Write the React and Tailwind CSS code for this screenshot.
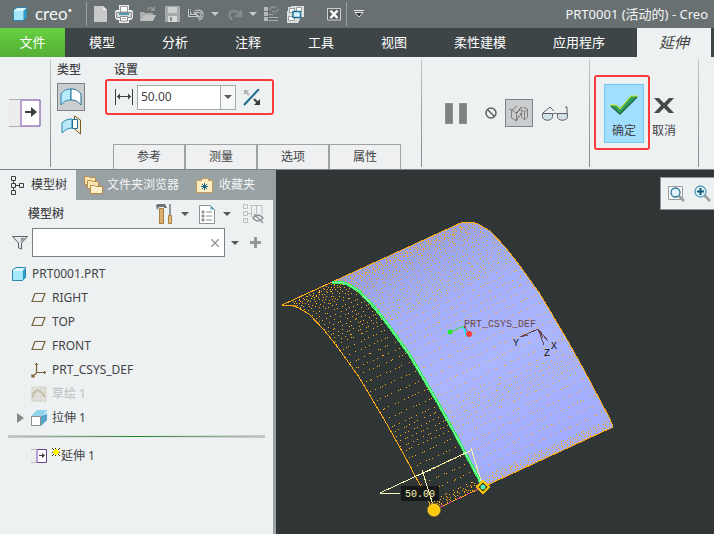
const quickActions = [
  { label: '新建', icon: <NewIcon />, pad: 'ml-[7px]' },
  { label: '打印', icon: <PrinterIcon />, pad: 'ml-2' },
  { label: '打开', icon: <OpenIcon />, pad: 'ml-[7px]' },
  { label: '保存', icon: <SaveIcon />, pad: 'ml-2' },
  { label: '撤消', icon: <UndoIcon />, pad: 'ml-2' },
  { label: '撤消列表', icon: <Caret color="#c3c8c9" />, pad: 'ml-1.5' },
  { label: '重做', icon: <RedoIcon />, pad: 'ml-2' },
  { label: '重做列表', icon: <Caret color="#c3c8c9" />, pad: 'ml-1.5' },
  { label: '重新生成', icon: <RegenIcon />, pad: 'ml-[7px]' },
  { label: '窗口', icon: <WindowsIcon />, pad: 'ml-2' },
  { label: '窗口列表', icon: <Caret color="#787071" />, pad: 'ml-[7px]' },
  { label: '关闭', icon: <CloseBoxIcon />, pad: 'ml-2' },
];

const ribbonTabs = ['模型', '分析', '注释', '工具', '视图', '柔性建模', '应用程序'];
const panelTabs = ['参考', '测量', '选项', '属性'];

const treeItems = [
  { label: 'RIGHT', icon: <PlaneIcon /> },
  { label: 'TOP', icon: <PlaneIcon /> },
  { label: 'FRONT', icon: <PlaneIcon /> },
  { label: 'PRT_CSYS_DEF', icon: <CsysIcon /> },
  { label: '草绘 1', icon: <SketchIcon />, muted: true },
  { label: '拉伸 1', icon: <ExtrudeIcon />, expandable: true },
];

/* ---------- icons ---------- */

function Caret({ color = '#58595b' }) {
  return (
    <svg width="8" height="4" viewBox="0 0 8 4">
      <path d="M0 0h8L4 4z" fill={color} />
    </svg>
  );
}

function CubeIcon() {
  return (
    <svg width="14" height="14" viewBox="0 0 14 14">
      <path d="M1 3L4 .5h9.500L11 3z" fill="#d9f5fd" />
      <path d="M10.500 3L13.500.5v10L10.500 13.500z" fill="#2f9fcb" />
      <path d="M.5 3h10v10.500H.5z" fill="#a5e8fc" />
      <path d="M.5 3L4 .5h9.500v10l-3 3H.5z" fill="none" stroke="#2d86ac" />
      <path d="M1 3.500h9.500L13 1" fill="none" stroke="#e4f9ff" strokeWidth=".8" />
    </svg>
  );
}

function NewIcon() {
  return (
    <svg width="13" height="16" viewBox="0 0 13 16">
      <path d="M0 0h9l4 4v12H0z" fill="#c8c9c9" />
      <path d="M9 0v4h4z" fill="#ececec" />
    </svg>
  );
}

function PrinterIcon() {
  return (
    <svg width="18" height="18" viewBox="0 0 18 18">
      <path d="M4 0h10v5h3l1 2v6l-2 2h-2v3H4v-3H2l-2-2V7l1-2h3z" fill="#ededed" />
      <path d="M5.500 1.500h7V7h-7z" fill="#fff" stroke="#999" />
      <path d="M1.500 7.500h15v5h-15z" fill="#d8d8d8" stroke="#8a8a8a" />
      <path d="M4 8h10v2H4z" fill="#4b9ab5" />
      <path d="M5.500 11.500h7V16h-7z" fill="#fff" stroke="#888" />
      <path d="M7 13.500h4" stroke="#aaa" />
    </svg>
  );
}

function OpenIcon() {
  return (
    <svg width="17" height="16" viewBox="0 0 17 16">
      <path d="M0 6h4l1 1h8v3H4l-4 5z" fill="#aaabab" />
      <path d="M4 9h12l-3 6H0z" fill="#c0c1c1" />
      <path d="M8 4c1-3 3-3 5-1" stroke="#929696" strokeWidth="1.500" fill="none" />
      <path d="M15 0v5h-5z" fill="#929696" />
    </svg>
  );
}

function SaveIcon() {
  return (
    <svg width="15" height="16" viewBox="0 0 15 16">
      <path d="M0 0h15v16H0z" fill="#a6a9a9" />
      <path d="M3 1h9v6H3z" fill="#cccece" />
      <path d="M3 10h9v6H3z" fill="#d8d8d8" />
      <path d="M5 11h2v4H5z" fill="#858989" />
    </svg>
  );
}

function UndoIcon() {
  return (
    <svg width="17" height="14" viewBox="0 0 17 14" fill="none">
      <path d="M1.500 2v6.500H8L5.500 6.500C9 2.500 14.500 4 14 8c0 2-1.500 3.500-3.500 4.500" stroke="#c9cdcd" strokeWidth="3" />
      <path d="M1.500 2v6.500H8M4 6.500C8 2.500 14.500 4 14 8c0 2-1.500 3.500-3.500 4.500M2 3l4 4" stroke="#565c5d" strokeWidth="1" />
    </svg>
  );
}

function RedoIcon() {
  return (
    <svg width="16" height="14" viewBox="0 0 16 14" fill="none">
      <path d="M14 3v6H8M13 8C10 2.500 2.500 3 2.500 8c0 2 1.500 3.500 3 4" stroke="#848b8b" strokeWidth="2.500" />
    </svg>
  );
}

function RegenIcon() {
  return (
    <svg width="15" height="16" viewBox="0 0 15 16">
      <path d="M0 1h4v4H0zM0 6h4v4H0zM0 11h4v4H0z" fill="#b6baba" />
      <path d="M5 8.500h4M5 11.500h9M5 14.500h9" stroke="#a7acac" />
      <path d="M6 4c0-3 4-4 6-2M14 3c0 3-4 4-6 2" stroke="#8e9494" strokeWidth="1.500" fill="none" />
    </svg>
  );
}

function WindowsIcon() {
  return (
    <svg width="17" height="17" viewBox="0 0 17 17">
      <path d="M4 0h13v11h-3l-3 6H0V5h1V1h3z" fill="#dedfdf" />
      <path d="M2.500 2.500h5v4h-5zM9.500 1.500h5v4h-5zM1.500 10.500h6v4h-6z" fill="#fff" stroke="#9a9d9e" />
      <path d="M6 5.500h7.500v6H6z" fill="#d6f4ff" stroke="#1e7094" strokeWidth="1.500" />
    </svg>
  );
}

function CloseBoxIcon() {
  return (
    <svg width="14" height="13" viewBox="0 0 14 13">
      <path d="M.5.5h13v11.500H.5z" fill="#5c6262" stroke="#d0d2d2" />
      <path d="M3.500 2.500l7 7.500M10.500 2.500l-7 7.500" stroke="#fff" strokeWidth="2.500" />
    </svg>
  );
}

function CustomizeIcon() {
  return (
    <svg width="10" height="8" viewBox="0 0 10 8">
      <path d="M0 .5h10" stroke="#e8e8e8" />
      <path d="M1 2.500h8L5 7z" fill="#2b3030" stroke="#e8e8e8" />
    </svg>
  );
}

function ExtendIcon({ small }) {
  return (
    <svg width={small ? 16 : 32} height={small ? 14 : 28} viewBox="0 0 32 28" preserveAspectRatio="none">
      <path d="M0 1h12v26H0z" fill="#ededee" />
      <path d="M0 .5h12M0 27.500h12" stroke="#aeb0b2" strokeWidth={small ? 2 : 1} />
      <path d="M12 1h19v26H12z" fill="#fff" stroke="#6b3f99" strokeWidth={small ? 2 : 1} />
      <path d="M12 1v26" stroke="#c3a5dd" strokeWidth={small ? 2 : 1} />
      <path d="M16 12h6V8l6 5-6 5v-4h-6z" fill="#3d3d3d" />
    </svg>
  );
}

function SameSurfaceIcon() {
  return (
    <svg width="22" height="18" viewBox="0 0 22 18">
      <path d="M1 6C4 2 7 1 11 1v11c-4 0-7 1-10 5z" fill="#b9e9fb" stroke="#2586ad" />
      <path d="M11 1c4 0 7 1 10 5v11c-3-4-6-5-10-5z" fill="#fff" stroke="#1d6d90" />
    </svg>
  );
}

function ToPlaneIcon() {
  return (
    <svg width="21" height="20" viewBox="0 0 21 20">
      <path d="M1 8c3-3 6-4 10-4v9c-4 0-7 2-10 5z" fill="#b9e9fb" stroke="#2586ad" />
      <path d="M13.500 4V1l6 4v14l-6-5" fill="#f7eedb" stroke="#7d5a20" />
      <path d="M11.500 4.500h5v9h-5z" fill="#fff" stroke="#1d6d90" />
    </svg>
  );
}

function WidthIcon() {
  return (
    <svg width="18" height="16" viewBox="0 0 18 16">
      <path d="M.5 0v16M17.500 0v16M2 7.500h14" stroke="#3f4142" />
      <path d="M2 7.500l3-3v6zM16 7.500l-3-3v6z" fill="#3f4142" />
    </svg>
  );
}

function FlipIcon() {
  return (
    <svg width="18" height="17" viewBox="0 0 18 17">
      <path d="M1 16L16 0" stroke="#1c6a8d" strokeWidth="2" />
      <path d="M1 1h5L1 6z" fill="#b2b3b4" />
      <path d="M3 3l3 3" stroke="#b2b3b4" strokeWidth="2" />
      <path d="M17 16h-6l6-6z" fill="#3c3c3c" />
      <path d="M15 14l-4-4" stroke="#3c3c3c" strokeWidth="2" />
    </svg>
  );
}

function PauseIcon() {
  return (
    <svg width="22" height="21" viewBox="0 0 22 21">
      <path d="M0 0h8v21H0zM14 0h8v21h-8z" fill="#808182" />
      <path d="M.5.5h7v20h-7zM14.500.5h7v20h-7z" fill="none" stroke="#919293" />
    </svg>
  );
}

function NoPreviewIcon() {
  return (
    <svg width="12" height="12" viewBox="0 0 12 12" fill="none" stroke="#606263" strokeWidth="1.500">
      <circle cx="6" cy="6" r="5" />
      <path d="M2.500 2.500l7 7" />
    </svg>
  );
}

function WirePreviewIcon() {
  return (
    <svg width="20" height="17" viewBox="0 0 20 17" fill="none">
      <path d="M2.500 5v8l5 3V8zM7.500 8l5-5M0 4l3 1 5-4M12.500 5v7l3 3V7zM15.500 7l3-3v8l-3 3M18 4l-4-2" stroke="#808283" />
      <path d="M7.500 8l5-6M7.500 15l5-7" stroke="#3c3c3c" strokeDasharray="2 1" />
    </svg>
  );
}

function GlassesIcon() {
  return (
    <svg width="26" height="15" viewBox="0 0 26 15" fill="none" stroke="#5b5f61">
      <path d="M.5 7.500h10v3c0 5-10 5-10 0zM15.500 7.500h10v3c0 5-10 5-10 0z" fill="#d3e2e8" />
      <path d="M11 8c2-1 3-1 4 0M1 7l7-6 4 4M25 7V1h-2" />
    </svg>
  );
}

function CheckIcon() {
  return (
    <svg width="28" height="20" viewBox="0 0 28 20">
      <path d="M0 10h7l3 3L21 1h7L10 19z" fill="#30a05e" />
      <path d="M1 11l9 8L27 2" fill="none" stroke="#256b43" strokeWidth="1.500" />
      <path d="M0 10h6l4 4L21 1h7" fill="none" stroke="#d7ee1c" />
    </svg>
  );
}

function CrossIcon() {
  return (
    <svg width="20" height="15" viewBox="0 0 20 15">
      <path d="M0 0h5l5 5 5-5h5l-7 7.500 7 7.500h-5l-5-5-5 5H0l7-7.500z" fill="#484a4b" />
    </svg>
  );
}

function TreeIcon() {
  return (
    <svg width="13" height="19" viewBox="0 0 13 19" fill="none" stroke="#3c3f40">
      <path d="M.5.5h4v4h-4zM.5 7.500h4v4h-4zM.5 14.500h4v4h-4zM8.500 7.500h4v4h-4zM2.500 5v2M2.500 12v2M5 9.500h3" />
    </svg>
  );
}

function FoldersIcon() {
  return (
    <svg width="19" height="18" viewBox="0 0 19 18" fill="#fbe4b4" stroke="#b98a45">
      <path d="M.5.5h4l1 1h6v7h-11z" />
      <path d="M3.500 4.500h4l1 1h6v7h-11z" />
      <path d="M6.500 9.500h4l1 1h7v7h-12z" fill="#fff0c9" />
    </svg>
  );
}

function FavoriteIcon() {
  return (
    <svg width="17" height="15" viewBox="0 0 17 15">
      <path d="M.5 2.500h5l1-2h6v2h4v12H.5z" fill="#fdecc2" stroke="#c59a50" />
      <path d="M8.500 5v7M5 8.500h7M6 6l5 5M11 6l-5 5" stroke="#176083" />
    </svg>
  );
}

function ToolsIcon() {
  return (
    <svg width="17" height="20" viewBox="0 0 17 20">
      <path d="M0 1l2-1h7l2 4H8V3H3L1 6z" fill="#69747a" />
      <path d="M3.500 4.500h4v15h-4z" fill="#dcae6d" stroke="#94682b" strokeWidth=".8" />
      <path d="M14 0v11" stroke="#73797c" strokeWidth="1.500" />
      <path d="M12.500 11.500h3v8h-3z" fill="#ebbd75" stroke="#94682b" strokeWidth=".8" />
    </svg>
  );
}

function ListPageIcon() {
  return (
    <svg width="16" height="19" viewBox="0 0 16 19">
      <path d="M.5.5h11l4 4v14H.5z" fill="#fff" stroke="#8d9497" />
      <path d="M11.500.5v4h4z" fill="#5fa3bd" />
      <path d="M3 6h2v2H3zM3 10h2v2H3zM3 14h2v2H3z" fill="#fff" stroke="#666" strokeWidth=".8" />
      <path d="M7 7h6M7 11h6M7 15h6" stroke="#8a8e90" />
    </svg>
  );
}

function HiddenTreeIcon() {
  return (
    <svg width="21" height="20" viewBox="0 0 21 20" fill="none" stroke="#bdc0c1">
      <path d="M.5.500h4v4h-4zM.5 7.500h4v4h-4zM.5 14.500h4v4h-4zM5 9.500h3M8.500 1v12M13.500 1v9M7 1.500h12v9" />
      <path d="M10 14c3-4 7-4 10 0-3 4-7 4-10 0zM11 10l9 9" stroke="#8c9092" strokeWidth="1.300" />
    </svg>
  );
}

function FunnelIcon() {
  return (
    <svg width="16" height="14" viewBox="0 0 16 14">
      <path d="M.5.5h15L9.500 7v6l-3-1V7z" fill="#e6e8e9" stroke="#5c6163" />
      <path d="M9 2h4L9 6z" fill="#868b8d" />
    </svg>
  );
}

function PlaneIcon() {
  return (
    <svg width="15" height="10" viewBox="0 0 15 10">
      <path d="M4 .5h10l-3 8H1z" fill="none" stroke="#7a6133" strokeWidth="1.200" />
    </svg>
  );
}

function CsysIcon() {
  return (
    <svg width="16" height="16" viewBox="0 0 16 16">
      <path d="M5.500 1v9.500H15M5.500 11L1 15M4 2.500h3M13.500 9v3M1 12v3h3" fill="none" stroke="#7a6133" strokeWidth="1.200" />
    </svg>
  );
}

function SketchIcon() {
  return (
    <svg width="16" height="16" viewBox="0 0 16 16">
      <path d="M0 0h16v16H0z" fill="#e0dfda" />
      <path d="M1 2.500h14M1 6.500h14M1 10.500h14M1 14.500h14" stroke="#c9c7bd" strokeDasharray="1 3" />
      <path d="M1 12C4 3 8 1 14 11" fill="none" stroke="#c3bda2" strokeWidth="1.800" />
    </svg>
  );
}

function ExtrudeIcon() {
  return (
    <svg width="16" height="16" viewBox="0 0 16 16">
      <path d="M0 6l6-6h10l-6 6z" fill="#8fd3ec" />
      <path d="M10 6l6-6v10l-6 6z" fill="#55a5c6" />
      <path d="M10 6l6-6v4z" fill="#b8e6f5" />
      <path d="M.5 6.500h9v9h-9z" fill="#fff" stroke="#8a8c8d" />
    </svg>
  );
}

function SparkIcon() {
  return (
    <svg width="8" height="8" viewBox="0 0 8 8" shapeRendering="crispEdges">
      <path d="M0 0h1v1H0zM3 0h1v1H3zM7 0h1v1H7zM0 4h1v1H0zM7 4h1v1H7zM0 7h1v1H0zM3 7h1v1H3zM7 7h1v1H7zM1 1h1v1H1zM6 1h1v1H6zM1 6h1v1H1zM6 6h1v1H6z" fill="#33330d" />
      <path d="M2 2h4v4H2zM3 1h2v1H3zM3 6h2v1H3zM1 3h1v2H1zM6 3h1v2H6z" fill="#fff200" />
    </svg>
  );
}

function RefitIcon() {
  return (
    <svg width="17" height="17" viewBox="0 0 17 17">
      <path d="M.5 1.500h14v13H.5z" fill="#fafafa" stroke="#989b9c" />
      <path d="M11 11l5 5" stroke="#9b9d9e" strokeWidth="2.500" />
      <circle cx="7.500" cy="7.500" r="4.500" fill="#e2f4fb" stroke="#2a7796" strokeWidth="1.300" />
    </svg>
  );
}

function ZoomInIcon() {
  return (
    <svg width="17" height="17" viewBox="0 0 17 17">
      <path d="M10 10l6 6" stroke="#9b9d9e" strokeWidth="2.500" />
      <circle cx="6.500" cy="6.500" r="5.500" fill="#e2f4fb" stroke="#5b9ab4" strokeWidth="1.300" />
      <path d="M6.500 3v7M3 6.500h7" stroke="#155a7c" strokeWidth="2" />
    </svg>
  );
}

/* ---------- swept surface ---------- */

// section curve, relative to the start of the sweep
const profile = [
  [0, 0], [8, 0], [15, 2], [27, 9], [42, 25], [54, 40], [77, 72], [106, 121], [121, 148], [147, 197], [150, 205],
];
const left = [282, 305];
const middle = [332, 282];
const right = [463, 222];

function curve(origin) {
  return profile.map(([x, y]) => `${origin[0] + x},${origin[1] + y}`).join(' ');
}

function pointAt(t) {
  const f = t * (profile.length - 1);
  const i = Math.min(Math.floor(f), profile.length - 2);
  const k = f - i;
  const [ax, ay] = profile[i];
  const [bx, by] = profile[i + 1];
  return [ax + (bx - ax) * k, ay + (by - ay) * k];
}

function stipple() {
  let seed = 7;
  const rnd = () => {
    seed = (seed * 16807) % 2147483647;
    return seed / 2147483647;
  };
  const rows = 48;
  const cols = 42;
  let d = '';
  for (let r = 1; r < rows; r++) {
    const [px, py] = pointAt(Math.pow(r / rows, 0.8));
    for (let c = 0; c < cols; c++) {
      const s = (c + rnd() * 0.9) / cols;
      const x = Math.round(left[0] + px + s * 180);
      const y = Math.round(left[1] + py - s * 82);
      d += `M${x} ${y}h1v1h-1z`;
    }
  }
  return d;
}

function Model() {
  const surface = `${curve(middle)} ${curve(right).split(' ').reverse().join(' ')}`;
  return (
    <svg width="438" height="364" viewBox="276 170 438 364" className="block shrink-0" fill="none">
      <defs>
        <linearGradient id="skin" gradientUnits="userSpaceOnUse" x1="400" y1="240" x2="520" y2="460">
          <stop offset="0" stopColor="#929ce2" />
          <stop offset="0.25" stopColor="#a2aefa" />
          <stop offset="0.6" stopColor="#aab6ff" />
          <stop offset="1" stopColor="#a2adff" />
        </linearGradient>
      </defs>
      <polygon points={surface} fill="url(#skin)" />
      <g shapeRendering="crispEdges">
        <path d={stipple()} fill="#ffab17" />
        <polyline points={curve(left)} stroke="#ffab17" />
        <polyline points={curve(right)} stroke="#ffab17" />
        <path d="M282 305L463 222M483 487l130-60" stroke="#ffab17" />
        <path d="M434 510l49-23" stroke="#e0358c" />
        <path d="M434 510l49-23" stroke="#ffab17" strokeDasharray="5 5" />
        <polyline points={curve(middle)} stroke="#35ea4c" strokeWidth="3" />
        <polyline points={curve(middle)} stroke="#7dffb0" />

        <path d="M464 327l3 10" stroke="#22e6f5" strokeWidth="2" />
        <path d="M450 332l14-6" stroke="#2ee83a" />
        <path d="M464 326l5 8" stroke="#a04040" />
        <path d="M520 337l18-8 10 12M538 329l6 16M520 337l8-2M539 330l4 8" stroke="#6b4650" />
      </g>
      <circle cx="450" cy="332" r="2.500" fill="#29e535" />
      <circle cx="469" cy="334" r="3" fill="#ff3b3b" />
      <g fontSize="10" className="font-['Liberation_Mono',monospace]">
        <text x="464" y="327" fill="#6b4650">PRT_CSYS_DEF</text>
        <text x="513" y="346" fill="#111">Y</text>
        <text x="544" y="356" fill="#111">Z</text>
        <text x="551" y="349" fill="#111">X</text>
      </g>

      <path d="M401 486h38v15h-38z" fill="#161919" />
      <g stroke="#f6f2b4" shapeRendering="crispEdges">
        <path d="M380 493l92-43M380 493h20M471 448l12 39M422 470l12 38M425 472l6-2" />
      </g>
      <text x="405" y="497" fill="#f6f2b4" fontSize="10" className="font-['Liberation_Mono',monospace]">50.00</text>
      <circle cx="434" cy="510" r="6.500" fill="#ffc907" stroke="#8e7413" />
      <circle cx="434" cy="510" r="5.500" stroke="#ffd23a" />
      <path d="M483 481l6 6-6 6-6-6z" fill="#3a3208" stroke="#ffc907" strokeWidth="2" />
      <circle cx="483" cy="487" r="2.500" fill="#55efc4" />
    </svg>
  );
}

/* ---------- panels ---------- */

function TitleBar() {
  return (
    <header className="flex h-7 items-center overflow-hidden bg-[#687071] pl-[13px] text-[#f5f7f7]">
      <CubeIcon />
      <span className="ml-2 w-[43px] font-['Lato',sans-serif] text-[17px] leading-5">creo<span className="align-top text-[8px] leading-3">•</span></span>
      <span className="ml-2 h-6 w-px bg-[#9aa1a2]" />
      {quickActions.map((item) => (
        <button key={item.label} aria-label={item.label} className={`shrink-0 ${item.pad}`}>
          {item.icon}
        </button>
      ))}
      <span className="ml-[5px] h-6 w-px bg-[#9aa1a2]" />
      <button aria-label="自定义快速访问工具栏" className="ml-[7px]"><CustomizeIcon /></button>
      <h1 className="ml-auto pr-1.5 text-[13px] leading-5 whitespace-nowrap">PRT0001 (活动的) - Creo</h1>
    </header>
  );
}

function RibbonTabs() {
  return (
    <nav className="flex h-[29px] gap-px overflow-hidden bg-[#3d4547] text-[13px] text-white">
      <button className="w-[65px] shrink-0 bg-linear-to-b from-[#66d142] to-[#55ae33]">文件</button>
      {ribbonTabs.map((tab) => (
        <button key={tab} className="shrink-0 px-[23px]">{tab}</button>
      ))}
      <button className="ml-2 w-[74px] shrink-0 bg-[#edf1f2] text-[15px] text-[#3f3f41] italic">延伸</button>
    </nav>
  );
}

function Divider() {
  return <span className="my-0.5 w-px shrink-0 bg-linear-to-b from-[#c3c7c8] via-[#9da2a3] to-[#858b8c]" />;
}

function Ribbon() {
  return (
    <section className="flex h-[113px] border-b border-[#7c8687] bg-[#edf1f2]">
      <div className="flex w-[50px] shrink-0 items-center justify-end pr-[9px]">
        <ExtendIcon />
      </div>
      <Divider />

      <div className="flex w-[54px] shrink-0 flex-col pt-1 pl-1.5">
        <h2 className="leading-[18px] font-medium">类型</h2>
        <button aria-label="相同" className="mt-1 flex h-7 w-7 items-center justify-center border border-[#808385] bg-[#cacccd]">
          <SameSurfaceIcon />
        </button>
        <button aria-label="到平面" className="flex h-7 w-7 items-center justify-center"><ToPlaneIcon /></button>
      </div>

      <div className="flex flex-1 flex-col pt-1">
        <label htmlFor="distance" className="pl-[9px] leading-[18px] font-medium">设置</label>
        <div className="flex h-9 w-[169px] items-center rounded-[3px] border-2 border-[#fb3b39] pl-2">
          <WidthIcon />
          <div className="ml-1 flex h-[25px] w-[99px] border border-[#a6a9aa] bg-white">
            <input id="distance" defaultValue="50.00" className="w-[82px] pl-[3px] text-[12px] outline-none" />
            <button aria-label="距离列表" className="flex flex-1 items-center justify-center border-l border-[#a6a9aa] bg-[#f6f7f7]">
              <Caret />
            </button>
          </div>
          <button aria-label="反向" className="ml-[7px]"><FlipIcon /></button>
        </div>
        <div className="mt-auto flex pl-2">
          {panelTabs.map((tab) => (
            <button key={tab} className="h-[25px] w-[72px] border border-b-0 border-[#9fa3a4] bg-[#eff0f2]">{tab}</button>
          ))}
        </div>
      </div>
      <Divider />

      <div className="flex w-[167px] shrink-0 items-center pl-[23px]">
        <button aria-label="暂停"><PauseIcon /></button>
        <button aria-label="无预览" className="ml-[18px]"><NoPreviewIcon /></button>
        <button aria-label="预览" className="ml-2 flex h-7 w-7 items-center justify-center border border-[#808385] bg-[#cacccd]">
          <WirePreviewIcon />
        </button>
        <button aria-label="眼镜" className="ml-[9px]"><GlassesIcon /></button>
      </div>
      <Divider />

      <div className="flex w-[108px] shrink-0 items-start pt-[18px] pl-1">
        <div className="flex h-[75px] w-14 shrink-0 items-start justify-end rounded-[3px] border-2 border-[#fb3b39] pt-[7px] pr-1">
          <button className="flex h-[59px] w-10 flex-col items-center border border-[#6ccaf8] bg-[#a2dfff] pt-2.5">
            <CheckIcon />
            <span className="mt-[7px] leading-[18px]">确定</span>
          </button>
        </div>
        <button className="mt-[9px] ml-0.5 flex h-[59px] flex-col items-center pt-3.5">
          <CrossIcon />
          <span className="mt-[9px] leading-[18px]">取消</span>
        </button>
      </div>
      <Divider />
      <div className="w-[15px] shrink-0" />
    </section>
  );
}

function ModelTree() {
  return (
    <aside className="flex w-[276px] shrink-0 flex-col bg-[#98a1a4]">
      <div className="flex h-[30px] text-[#f4f6f6]">
        <button className="flex w-[76px] items-center gap-[7px] bg-[#edf1f2] pl-[11px] text-[#38393b]">
          <TreeIcon />模型树
        </button>
        <button className="ml-2 flex items-center gap-1"><FoldersIcon />文件夹浏览器</button>
        <button className="ml-[17px] flex items-center gap-1.5"><FavoriteIcon />收藏夹</button>
      </div>

      <div className="mr-[3px] flex-1 bg-[#edf1f2]">
        <div className="flex h-7 items-center pr-[9px] pl-7">
          <h2 className="font-medium">模型树</h2>
          <button aria-label="设置" className="ml-auto"><ToolsIcon /></button>
          <button aria-label="设置列表" className="ml-2"><Caret /></button>
          <button aria-label="显示" className="ml-2.5"><ListPageIcon /></button>
          <button aria-label="显示列表" className="ml-2"><Caret /></button>
          <button aria-label="隐藏" className="ml-3"><HiddenTreeIcon /></button>
        </div>

        <div className="flex h-[29px] items-center pl-3">
          <FunnelIcon />
          <div className="ml-1 flex h-[29px] w-[193px] items-center border border-[#788283] bg-white pr-[5px]">
            <input aria-label="过滤" className="min-w-0 flex-1 px-1 outline-none" />
            <button aria-label="清除">
              <svg width="8" height="8" viewBox="0 0 8 8"><path d="M0 0l8 8M8 0L0 8" stroke="#929596" strokeWidth="1.300" /></svg>
            </button>
          </div>
          <button aria-label="过滤列表" className="ml-1.5"><Caret /></button>
          <button aria-label="添加" className="ml-[11px]">
            <svg width="11" height="11" viewBox="0 0 11 11"><path d="M4 0h3v4h4v3H7v4H4V7H0V4h4z" fill="#959899" /></svg>
          </button>
        </div>

        <ul className="pt-[5px] leading-6">
          <li className="flex h-6 items-center gap-1.5 pl-3"><CubeIcon />PRT0001.PRT</li>
          {treeItems.map((item) => (
            <li key={item.label} className="flex h-6 items-center pl-4">
              <span className="w-[15px]">
                {item.expandable && (
                  <button aria-label="展开" className="block">
                    <svg width="8" height="10" viewBox="0 0 8 10"><path d="M1 0l7 5-7 5z" fill="#858889" /></svg>
                  </button>
                )}
              </span>
              <span className="w-[21px]">{item.icon}</span>
              <span className={item.muted ? 'text-[#bcbec0]' : ''}>{item.label}</span>
            </li>
          ))}
        </ul>

        <div className="mx-2 mt-[5px] flex h-[3px] items-center bg-linear-to-r from-[#c3c6c6] via-[#edf1f2] to-[#c3c6c6]">
          <span className="h-px flex-1 bg-linear-to-r from-[#c3c6c6] via-[#12831a] to-[#c3c6c6]" />
        </div>
        <div className="mt-1.5 flex h-6 items-center pl-[31px]">
          <ExtendIcon small />
          <span className="ml-[5px] self-start pt-1"><SparkIcon /></span>
          <span className="ml-px">延伸 1</span>
        </div>
      </div>
    </aside>
  );
}

export default function App() {
  return (
    <div className="flex min-h-screen flex-col overflow-hidden font-['Noto_Sans','Noto_Sans_CJK_SC',sans-serif] text-[12px] text-[#434345]">
      <TitleBar />
      <RibbonTabs />
      <Ribbon />
      <div className="flex flex-1">
        <ModelTree />
        <main className="relative flex-1 overflow-hidden bg-[#303636]">
          <Model />
          <div className="absolute top-[7px] right-0 flex h-[33px] w-[54px] items-center gap-[9px] border border-r-0 border-[#8f9798] bg-[#edf1f2] pl-[7px]">
            <button aria-label="重新调整"><RefitIcon /></button>
            <button aria-label="放大"><ZoomInIcon /></button>
          </div>
        </main>
      </div>
    </div>
  );
}
